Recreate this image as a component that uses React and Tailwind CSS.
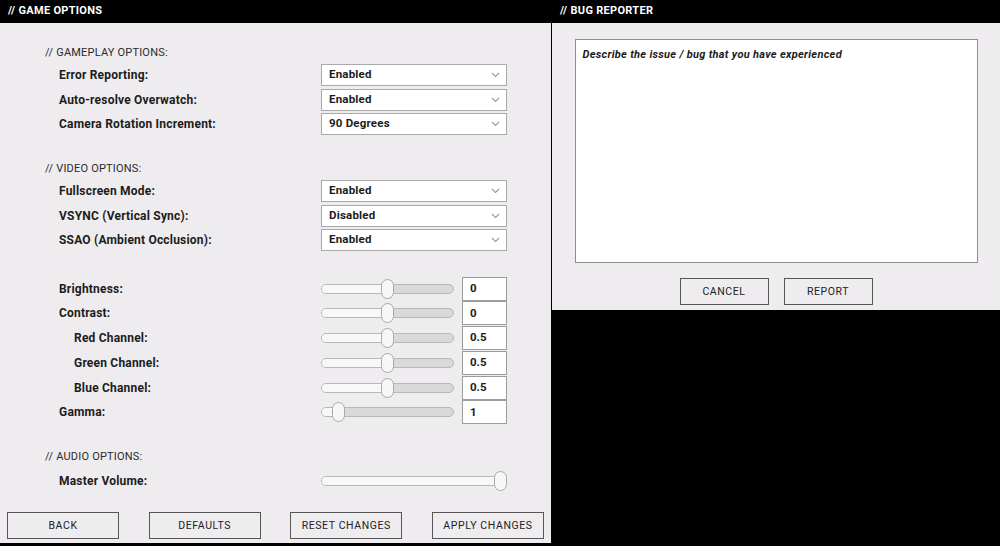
import React from 'react';

const font = { fontFamily: 'Roboto, "Liberation Sans", sans-serif' };

function Chevron() {
    return (
        <svg width="9" height="6" viewBox="0 0 9 6" className="mr-[6px]">
            <polyline points="1,1 4.5,4.5 8,1" fill="none" stroke="#9a9a9a" strokeWidth="1.1" />
        </svg>
    );
}

function SectionTitle({ children }) {
    return (
        <div className="h-[14px] leading-[14px] text-[11px] tracking-[0.2px] text-[#2a2a2a] uppercase">
            {children}
        </div>
    );
}

function Label({ text, indent }) {
    return (
        <div className={`w-[276px] text-[12px] font-bold text-[#1c1c1c] tracking-[0.2px] ${indent ? 'pl-[29px]' : 'pl-[14px]'}`}>
            {text}
        </div>
    );
}

function SelectRow({ label, value }) {
    return (
        <div className="flex items-center h-[22px]">
            <Label text={label} />
            <div className="w-[186px] h-[22px] bg-white border border-[#a9a9a9] flex items-center justify-between pl-[7px]">
                <span className="text-[11.5px] font-bold text-[#1c1c1c] tracking-[0.2px]">{value}</span>
                <Chevron />
            </div>
        </div>
    );
}

function Slider({ pct, width }) {
    return (
        <div className="relative h-[24px] flex items-center" style={{ width }}>
            <div className="w-full h-[10px] rounded-full border border-[#b8b8b8] bg-[#d9d9d9] overflow-hidden">
                <div className="h-full bg-[#f8f8f8]" style={{ width: pct + '%' }}></div>
            </div>
            <div
                className="absolute top-[2px] w-[13px] h-[20px] rounded-full bg-[#f7f7f7] border border-[#a8a8a8]"
                style={{ left: `calc(${pct}% - 6.5px)` }}
            ></div>
        </div>
    );
}

function SliderRow({ label, value, pct, indent }) {
    return (
        <div className="flex items-center h-[23px]">
            <Label text={label} indent={indent} />
            <Slider pct={pct} width={133} />
            <div className="ml-[8px] w-[45px] h-[24px] bg-white border border-[#9c9c9c] flex items-center pl-[7px] text-[11.5px] font-bold text-[#1c1c1c]">
                {value}
            </div>
        </div>
    );
}

function Btn({ children, w }) {
    return (
        <button className={`${w} h-[27px] border border-[#555] bg-[#efecef] text-[10.5px] tracking-[0.6px] text-[#222] flex items-center justify-center`}>
            {children}
        </button>
    );
}

export default function App() {
    const gameplay = [
        ['Error Reporting:', 'Enabled'],
        ['Auto-resolve Overwatch:', 'Enabled'],
        ['Camera Rotation Increment:', '90 Degrees'],
    ];
    const video = [
        ['Fullscreen Mode:', 'Enabled'],
        ['VSYNC (Vertical Sync):', 'Disabled'],
        ['SSAO (Ambient Occlusion):', 'Enabled'],
    ];
    const sliders = [
        { label: 'Brightness:', value: '0', pct: 50 },
        { label: 'Contrast:', value: '0', pct: 50 },
        { label: 'Red Channel:', value: '0.5', pct: 50, indent: true },
        { label: 'Green Channel:', value: '0.5', pct: 50, indent: true },
        { label: 'Blue Channel:', value: '0.5', pct: 50, indent: true },
        { label: 'Gamma:', value: '1', pct: 13 },
    ];

    return (
        <div className="w-[1000px] h-[546px] bg-black flex items-start overflow-hidden" style={font}>
            {/* game options */}
            <div className="w-[551px] h-[543px] flex flex-col">
                <div className="h-[23px] bg-black text-white font-bold text-[11px] tracking-[0.3px] flex items-center pl-[8px]">
                    // GAME OPTIONS
                </div>
                <div className="flex-1 bg-[#efecef] flex flex-col pl-[45px] pt-[23px]">
                    <SectionTitle>// Gameplay options:</SectionTitle>
                    <div className="flex flex-col gap-[2.5px] mt-[4px]">
                        {gameplay.map(([l, v]) => <SelectRow key={l} label={l} value={v} />)}
                    </div>

                    <div className="mt-[27px]">
                        <SectionTitle>// Video options:</SectionTitle>
                    </div>
                    <div className="flex flex-col gap-[2.5px] mt-[4px]">
                        {video.map(([l, v]) => <SelectRow key={l} label={l} value={v} />)}
                    </div>

                    <div className="flex flex-col gap-[1.8px] mt-[26px]">
                        {sliders.map(s => <SliderRow key={s.label} {...s} />)}
                    </div>

                    <div className="mt-[26px]">
                        <SectionTitle>// Audio options:</SectionTitle>
                    </div>
                    <div className="flex items-center h-[24px] mt-[5px]">
                        <Label text="Master Volume:" />
                        <Slider pct={97} width={185} />
                    </div>

                    <div className="flex justify-between items-center -ml-[38px] mr-[7px] mt-auto mb-[4px]">
                        <Btn w="w-[112px]">BACK</Btn>
                        <Btn w="w-[112px]">DEFAULTS</Btn>
                        <Btn w="w-[112px]">RESET CHANGES</Btn>
                        <Btn w="w-[112px]">APPLY CHANGES</Btn>
                    </div>
                </div>
            </div>

            {/* bug reporter */}
            <div className="ml-[1px] w-[448px] h-[310px] flex flex-col">
                <div className="h-[23px] bg-black text-white font-bold text-[11px] tracking-[0.3px] flex items-center pl-[8px]">
                    // BUG REPORTER
                </div>
                <div className="flex-1 bg-[#efecef] flex flex-col items-center pt-[16px]">
                    <div className="w-[403px] h-[224px] bg-white border border-[#8e8e8e] px-[7px] pt-[7px]">
                        <p className="text-[11px] font-bold italic text-[#1c1c1c] tracking-[0.3px]">
                            Describe the issue / bug that you have experienced
                        </p>
                    </div>
                    <div className="flex gap-[15px] mt-[15px]">
                        <Btn w="w-[89px]">CANCEL</Btn>
                        <Btn w="w-[89px]">REPORT</Btn>
                    </div>
                </div>
            </div>
        </div>
    );
}
